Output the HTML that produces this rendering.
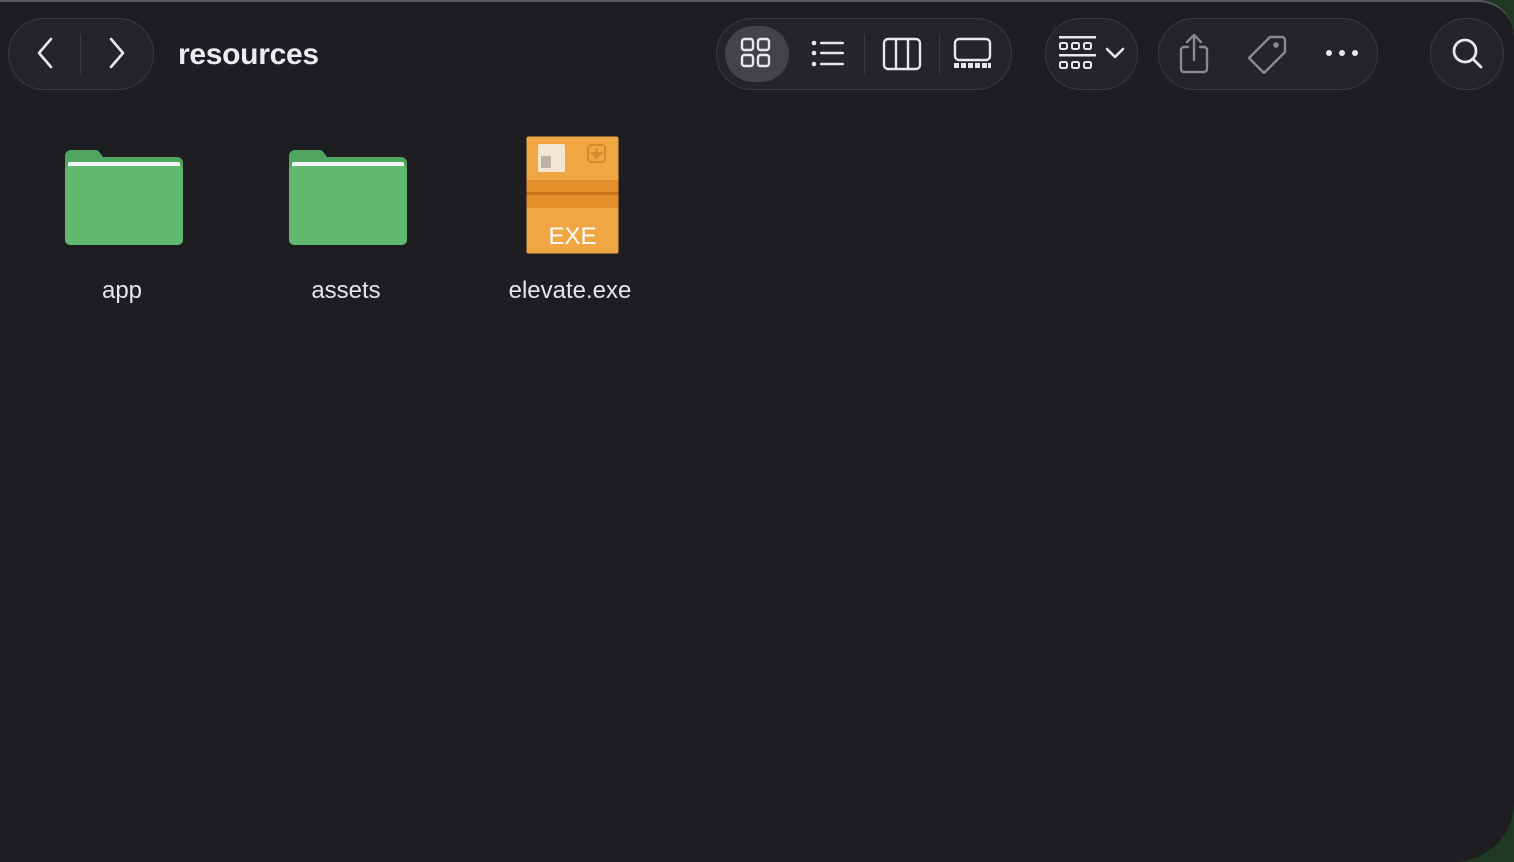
<!DOCTYPE html>
<html><head><meta charset="utf-8">
<style>
html,body{margin:0;padding:0;}
body{width:1514px;height:862px;overflow:hidden;background:#1f3a24;position:relative;font-family:"Liberation Sans",sans-serif;}
#win{position:absolute;left:0;top:0;width:1514px;height:862px;background:#1e1d21;border-top:2px solid #5a595d;border-top-right-radius:36px;border-bottom-right-radius:60px;box-sizing:border-box;overflow:hidden;}
.pill{position:absolute;border:1.5px solid #3a393d;background:#252428;border-radius:40px;box-sizing:border-box;}
svg{position:absolute;}
.t{position:absolute;color:#e6e5e8;font-size:24px;text-align:center;width:200px;}
</style></head><body>
<div id="win">
 <div class="pill" style="left:8px;top:16px;width:146px;height:72px;"></div>
 <div style="position:absolute;left:80px;top:32px;width:1px;height:40px;background:#3a393d"></div>
 <svg style="left:30px;top:34px" width="30" height="34" viewBox="0 0 30 34"><path d="M21 3 L9 17 L21 31" fill="none" stroke="#e8e8ea" stroke-width="2.6" stroke-linecap="round" stroke-linejoin="round"/></svg>
 <svg style="left:102px;top:34px" width="30" height="34" viewBox="0 0 30 34"><path d="M9 3 L21 17 L9 31" fill="none" stroke="#e8e8ea" stroke-width="2.6" stroke-linecap="round" stroke-linejoin="round"/></svg>
 <div style="position:absolute;left:178px;top:36px;color:#ececee;font-size:30px;font-weight:bold;letter-spacing:-0.3px">resources</div>

 <div class="pill" style="left:716px;top:16px;width:296px;height:72px;"></div>
 <div style="position:absolute;left:725px;top:24px;width:64px;height:56px;border-radius:30px;background:#444347"></div>
 <svg style="left:738px;top:34px" width="38" height="36" viewBox="0 0 38 36"><g fill="none" stroke="#e8e8ea" stroke-width="2.4"><rect x="4" y="3" width="11" height="11" rx="2.5"/><rect x="20" y="3" width="11" height="11" rx="2.5"/><rect x="4" y="19" width="11" height="11" rx="2.5"/><rect x="20" y="19" width="11" height="11" rx="2.5"/></g></svg>
 <svg style="left:806px;top:34px" width="44" height="36" viewBox="0 0 44 36"><g fill="#e8e8ea"><circle cx="8" cy="7" r="2.3"/><circle cx="8" cy="17" r="2.3"/><circle cx="8" cy="28" r="2.3"/><rect x="14" y="5.7" width="24" height="2.6" rx="1.3"/><rect x="14" y="15.7" width="24" height="2.6" rx="1.3"/><rect x="14" y="26.7" width="24" height="2.6" rx="1.3"/></g></svg>
 <div style="position:absolute;left:864px;top:32px;width:1px;height:40px;background:#3a393d"></div>
 <svg style="left:880px;top:34px" width="44" height="36" viewBox="0 0 44 36"><g fill="none" stroke="#e8e8ea" stroke-width="2.4"><rect x="4" y="3" width="36" height="30" rx="4"/><line x1="16" y1="3" x2="16" y2="33"/><line x1="28" y1="3" x2="28" y2="33"/></g></svg>
 <div style="position:absolute;left:939px;top:32px;width:1px;height:40px;background:#3a393d"></div>
 <svg style="left:950px;top:34px" width="46" height="36" viewBox="0 0 46 36"><rect x="5" y="3" width="35" height="21" rx="4" fill="none" stroke="#e8e8ea" stroke-width="2.4"/><g fill="#e8e8ea"><rect x="4" y="27" width="5" height="5"/><rect x="11" y="27" width="5" height="5"/><rect x="18" y="27" width="5" height="5"/><rect x="25" y="27" width="5" height="5"/><rect x="32" y="27" width="5" height="5"/><rect x="38" y="27" width="3" height="5"/></g></svg>

 <div class="pill" style="left:1045px;top:16px;width:93px;height:72px;"></div>
 <svg style="left:1056px;top:32px" width="44" height="40" viewBox="0 0 44 40"><g fill="#e8e8ea"><rect x="3" y="2" width="37" height="2.5"/><rect x="3" y="20" width="37" height="2.5"/></g><g fill="none" stroke="#e8e8ea" stroke-width="2"><rect x="4" y="9" width="7" height="6" rx="1.5"/><rect x="16" y="9" width="7" height="6" rx="1.5"/><rect x="28" y="9" width="7" height="6" rx="1.5"/><rect x="4" y="28" width="7" height="6" rx="1.5"/><rect x="16" y="28" width="7" height="6" rx="1.5"/><rect x="28" y="28" width="7" height="6" rx="1.5"/></g></svg>
 <svg style="left:1104px;top:42px" width="22" height="18" viewBox="0 0 22 18"><path d="M3 5 L11 13 L19 5" fill="none" stroke="#e8e8ea" stroke-width="2.6" stroke-linecap="round" stroke-linejoin="round"/></svg>

 <div class="pill" style="left:1158px;top:16px;width:220px;height:72px;"></div>
 <svg style="left:1176px;top:30px" width="36" height="44" viewBox="0 0 36 44"><g fill="none" stroke="#8a898d" stroke-width="2.4" stroke-linecap="round" stroke-linejoin="round"><path d="M12 15 H8 a3 3 0 0 0 -3 3 V37 a3 3 0 0 0 3 3 H28 a3 3 0 0 0 3 -3 V18 a3 3 0 0 0 -3 -3 H24"/><path d="M18 4 V28"/><path d="M11 10 L18 3 L25 10"/></g></svg>
 <svg style="left:1246px;top:30px" width="44" height="44" viewBox="0 0 44 44"><g fill="none" stroke="#8a898d" stroke-width="2.4" stroke-linejoin="round"><path d="M24 5 H36 a3 3 0 0 1 3 3 V20 L18 41 L3 26 Z"/><circle cx="30" cy="13" r="1.6" fill="#8a898d"/></g></svg>
 <svg style="left:1324px;top:44px" width="36" height="14" viewBox="0 0 36 14"><g fill="#e8e8ea"><circle cx="5" cy="7" r="3"/><circle cx="18" cy="7" r="3"/><circle cx="31" cy="7" r="3"/></g></svg>

 <div class="pill" style="left:1430px;top:16px;width:74px;height:72px;"></div>
 <svg style="left:1448px;top:33px" width="40" height="40" viewBox="0 0 40 40"><g fill="none" stroke="#e8e8ea" stroke-width="2.8" stroke-linecap="round"><circle cx="17" cy="16" r="11"/><line x1="25" y1="24" x2="33" y2="32"/></g></svg>

 <svg style="left:63px;top:146px" width="122" height="100" viewBox="0 0 122 100"><path d="M2 8 a6 6 0 0 1 6 -6 H32 a6 6 0 0 1 5 3 L40 9 H114 a6 6 0 0 1 6 6 V30 H2 Z" fill="#52a561"/><rect x="5" y="14" width="112" height="12" rx="2" fill="#f2f5f2"/><rect x="2" y="18" width="118" height="79" rx="5" fill="#60b96e"/></svg>
 <svg style="left:287px;top:146px" width="122" height="100" viewBox="0 0 122 100"><path d="M2 8 a6 6 0 0 1 6 -6 H32 a6 6 0 0 1 5 3 L40 9 H114 a6 6 0 0 1 6 6 V30 H2 Z" fill="#52a561"/><rect x="5" y="14" width="112" height="12" rx="2" fill="#f2f5f2"/><rect x="2" y="18" width="118" height="79" rx="5" fill="#60b96e"/></svg>
 <svg style="left:526px;top:134px" width="93" height="118" viewBox="0 0 93 118"><rect x="0.5" y="0.5" width="92" height="117" rx="2" fill="#f0a743"/><rect x="0.5" y="44" width="92" height="28" fill="#e38f2c"/><rect x="0.5" y="56" width="92" height="3" fill="#c9741c"/><rect x="12" y="8" width="27" height="28" rx="2" fill="#f3e6d3"/><rect x="15" y="20" width="10" height="12" fill="#bdb2a4"/><rect x="62" y="9" width="17" height="17" rx="3" fill="none" stroke="#d98a2c" stroke-width="2"/><path d="M70.5 12 V20 M66 17 L70.5 22 L75 17 Z" stroke="#d98a2c" stroke-width="2" fill="#d98a2c"/><text x="46.5" y="108" text-anchor="middle" font-family="Liberation Sans,sans-serif" font-size="24" fill="#ffffff">EXE</text></svg>

 <div class="t" style="left:22px;top:275px">app</div>
 <div class="t" style="left:246px;top:275px">assets</div>
 <div class="t" style="left:470px;top:275px">elevate.exe</div>
</div>
</body></html>
